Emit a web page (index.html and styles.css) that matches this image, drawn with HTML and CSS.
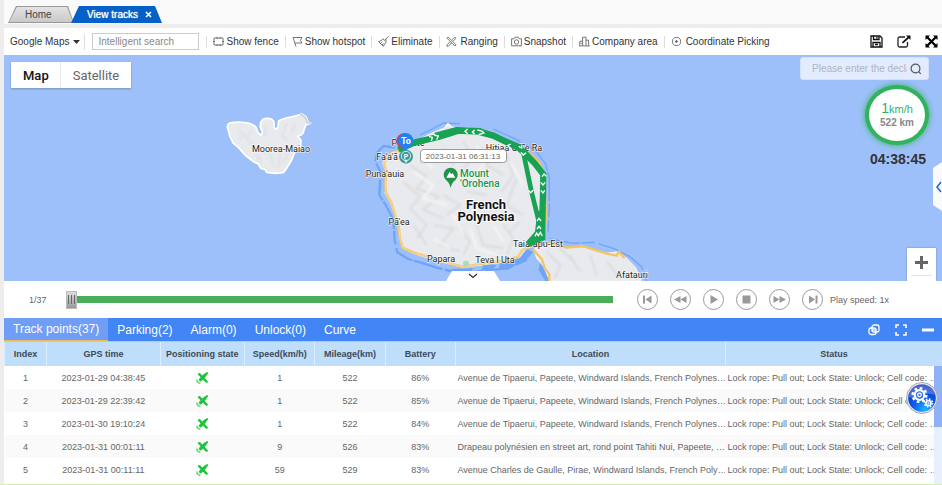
FILE: index.html
```html
<!DOCTYPE html>
<html lang="en">
<head>
<meta charset="utf-8">
<title>View tracks</title>
<link rel="stylesheet" href="styles.css">
</head>
<body>
<svg class="defs" aria-hidden="true">
  <symbol id="sat" viewBox="0 0 12 12">
    <g fill="none" stroke="#1fc43c" stroke-linecap="round">
      <path d="M4.6 7.6L8.8 3.4" stroke-width="3.4"/>
      <path d="M3.2 2.2L5.4 4.4M7.8 6.9L10.6 9.6" stroke-width="2.4"/>
      <path d="M9 3L11 1.2" stroke-width="2.2"/>
      <path d="M1 8.2Q1.2 10.6 3.6 11" stroke="#7fdc8d" stroke-width="2"/>
    </g>
  </symbol>
</svg>
<div class="app">
  <nav class="pages">
    <a class="page" href="#home"><span>Home</span></a>
    <a class="page current" href="#tracks"><span>View tracks</span>
      <svg width="7" height="7" viewBox="0 0 7 7"><path d="M1 1L6 6M6 1L1 6" stroke="#fff" stroke-width="1.7"/></svg></a>
  </nav>

  <div class="toolbar">
    <button class="provider">Google Maps
      <svg width="7" height="4" viewBox="0 0 7 4"><path d="M0 0H7L3.500 4Z" fill="#333"/></svg></button>
    <input class="search" type="text" placeholder="Intelligent search" aria-label="Intelligent search">
    <button class="tool"><svg viewBox="0 0 11 11"><path d="M1 2H10V9H1ZM4 .8V3M7 8V10.200M0 5.500H2M9 5.500H11M7 1V3M4 8V10"/></svg>Show fence</button>
    <button class="tool"><svg viewBox="0 0 11 11"><path d="M1 1.500L10 1.500L8.500 4.200L9.800 7H3M1 1.500L4 10.500"/></svg>Show hotspot</button>
    <button class="tool"><svg viewBox="0 0 11 11"><path d="M10.500 .5L7 3.800M5 2.800L8.300 6M5 2.800Q3.500 5 .6 5.600L5.400 10.400Q6.200 8 8.300 6M2.500 7.400L4 5.800M4 9L5.600 7.400M7.600 3.200Q9 4 8 5.200"/></svg>Eliminate</button>
    <button class="tool"><svg viewBox="0 0 11 11"><path d="M1 2.200L2.200 1L10 8.800L8.800 10ZM10 2.200L8.800 1L6.200 3.600M4.400 5.400L1 8.800L1 10.200H2.400L5.600 6.800M7.200 5.200L10 2.200"/></svg><i></i>Ranging</button>
    <button class="tool"><svg viewBox="0 0 11 11"><path d="M.6 2.800H3L4 1.200H7.200L8.200 2.800H10.400V9.800H.6Z"/><circle cx="5.500" cy="6" r="2.200"/></svg>Snapshot</button>
    <button class="tool"><svg viewBox="0 0 11 11"><path d="M.8 9.800V5.200H3.600M3.600 9.800V1.200H7V9.800M7 4.200H9.600V9.800M0 9.900H10.800M2.200 6.800V8"/></svg>Company area</button>
    <button class="tool"><svg viewBox="0 0 11 11"><circle cx="5.500" cy="5.500" r="4.100"/><circle cx="5.500" cy="5.500" r=".9" fill="#555"/></svg><i></i>Coordinate Picking</button>
    <div class="actions">
      <button aria-label="Save"><svg width="13" height="13" viewBox="0 0 13 13"><g fill="none" stroke="#111" stroke-width="1.300"><path d="M1 1H10L12 3V12H1Z"/><path d="M3.500 1V4.500H9V1M3 12V7.500H10V12M7 2V3.500M5 9.500H8"/></g></svg></button>
      <button aria-label="Open"><svg width="14" height="13" viewBox="0 0 14 13"><path d="M8 2H2.500Q1 2 1 3.500V10.500Q1 12 2.500 12H9Q10.500 12 10.500 10.500V7" fill="none" stroke="#222" stroke-width="1.300"/><path d="M5.500 7.800L12 2" stroke="#111" stroke-width="1.700"/><path d="M9 .5H13.500V5Z" fill="#111"/></svg></button>
      <button aria-label="Expand"><svg width="13" height="13" viewBox="0 0 13 13"><path d="M2 2L11 11M11 2L2 11" stroke="#000" stroke-width="2.200"/><path d="M.5 .5H5L.5 5ZM12.500 .5V5L8 .5ZM.5 12.500V8L5 12.500ZM12.500 12.500H8L12.500 8Z"/></svg></button>
    </div>
  </div>

  <main class="map">
    <svg class="canvas" viewBox="4 55 938 226" preserveAspectRatio="xMidYMid slice">
      <defs><filter id="soft"><feGaussianBlur stdDeviation="3"/></filter>
      <clipPath id="land"><path d="M115 110L150 92L180 72L215 55L250 40L262 30L285 38L320 38L370 45L410 60L450 85L490 100L520 125L545 155L558 185L556 240L555 300L550 355L545 375L530 385L500 400L480 425L440 440L400 445L350 452L310 458L280 450L240 440L200 428L160 415L130 400L122 370L118 330L105 300L90 260L75 235L80 200L78 170L68 145L80 125Z"/></clipPath></defs>
      <g transform="translate(220 100) scale(.33333)">
        <path class="island" d="M22 80Q24 68 36 68L55 66L75 68Q98 70 108 82L114 98L122 105L128 98L121 82Q120 56 138 55Q158 54 162 66V82L168 88L174 80L176 62L195 55L225 48L245 42L258 50L264 66L272 70L258 74L252 90Q250 108 232 108L243 120L242 140L225 155L215 180L200 205L190 218L165 220L140 217L135 208L122 205L115 192L100 185L75 165L55 142L40 130L30 110Z"/>
        <path d="M240 42L256 52L262 68L274 71" fill="none" stroke="#cfd1d3" stroke-width="5"/>
        <g class="ridge faint" filter="url(#soft)"><path d="M55 90L75 105L58 120M95 88L80 118L100 132M140 75L132 110M200 70L185 110L205 120M225 70L215 100M110 165L125 190M150 160L160 200M180 155L175 205M205 155L190 190"/></g>
        <circle cx="18" cy="62" r="3" fill="#b9c3cf"/>
      </g>
      <g transform="translate(360 115) scale(.33333)">
        <path class="reef" stroke-width="7" d="M105 98L70 93L52 112L46 140L62 172L60 205L58 240L80 275L100 315L104 375L112 412L145 432L190 445L230 458L270 468L320 474L380 466L440 460L500 435"/>
        <path class="reef" stroke-width="4" d="M180 60L225 38L250 24L300 26M400 42L470 74L525 105L556 145L568 190L568 280L564 350"/>
        <path d="M270 462L300 478L330 474L340 460ZM370 448L365 466L395 465L410 450ZM420 446L415 464L445 464L470 448L500 434L520 410L498 402L480 430ZM540 440L570 498H556L536 465Z" fill="#6fa4f8"/>
        <path class="reef" stroke-width="4" d="M570 372L640 385L700 382L760 400L810 425L845 455L860 498"/>
        <path class="shore" d="M115 110L150 92L180 72L215 55L250 40L262 30L285 38L320 38L370 45L410 60L450 85L490 100L520 125L545 155L558 185L556 240L555 300L550 355L545 375L530 385L500 400L480 425L440 440L400 445L350 452L310 458L280 450L240 440L200 428L160 415L130 400L122 370L118 330L105 300L90 260L75 235L80 200L78 170L68 145L80 125Z"/>
        <path class="shore" d="M522 402L560 384L620 398L670 393L740 415L775 410L800 430L825 455L843 490V500H570L552 455L530 430Z"/>
        <g clip-path="url(#land)"><g class="ridge" filter="url(#soft)">
          <path d="M150 150L200 185L170 220L235 245L190 285L250 310M130 200L180 245L150 280L200 330L170 370M250 100L280 150M310 80L340 130L310 160M400 100L380 150L430 180M440 120L460 180L425 230M470 190L440 270L490 300M220 330L280 340L240 390L300 410M290 330L330 380L310 420M350 330L370 390L430 400M430 330L460 370L440 420M480 320L450 350M160 330L200 390M250 240L300 270L260 300M320 230L380 240"/>
        </g><g class="ridge light" filter="url(#soft)"><path d="M160 170L220 210L190 250L260 270M350 90L370 150L340 190M450 140L490 210M220 370L270 400M330 340L350 400L410 420M180 120L220 160M280 300L310 360M400 330L430 380"/></g></g>
        <g class="ridge" filter="url(#soft)"><path d="M560 410L600 450L585 490M630 420L660 470M690 420L710 480M740 440L780 490M600 400L640 440"/></g>
        <g class="road"><path d="M118 108L98 112L78 128L72 148L80 170L76 205L78 235L94 262L105 298L116 330L120 370L128 398L160 412L200 424L240 436L280 448L310 456L350 448L400 442L440 436L475 424L488 405L510 395L535 383L554 350L558 300L552 180L540 145L500 106"/>
        <path d="M520 404L545 432L555 460L568 478V500M560 384L620 398L670 394L740 416L770 422L776 410L794 430"/></g>
        <g class="road inner"><path d="M118 108L98 112L78 128L72 148L80 170L76 205L78 235L94 262L105 298L116 330L120 370L128 398L160 412L200 424L240 436L280 448L310 456L350 448L400 442L440 436L475 424L488 405L510 395"/></g>
        <circle cx="318" cy="446" r="9" fill="#a9dcb8"/>
      </g>
      <g class="place">
        <text x="281" y="152">Moorea-Maiao</text>
        <text x="408" y="146">Papeete</text>
        <text x="387" y="160">Fa'a'ā</text>
        <text x="385" y="177">Puna'auia</text>
        <text x="399" y="225">Pā'ea</text>
        <text x="441" y="262">Papara</text>
        <text x="495" y="263">Teva I Uta</text>
        <text x="514" y="151">Hitiaa O Te Ra</text>
        <text x="538" y="247">Taiarapu-Est</text>
        <text x="632" y="278">Afatauri</text>
      </g>
      <g class="country"><text x="486" y="209">French</text><text x="486" y="221">Polynesia</text></g>
      <g class="peak"><text x="460" y="177">Mount</text><text x="460" y="187">'Orohena</text></g>
      <g transform="translate(360 115) scale(.33333)">
        <path d="M272 218Q268 202 257 194Q250 186 251 178Q254 159 272 158Q290 159 293 178Q294 186 287 194Q276 202 272 218Z" fill="#23924a"/>
        <path d="M259 188L269 170L274 178L278 174L286 188Z" fill="#fff"/>
        <g fill="none" stroke="#16a353" stroke-width="19" stroke-linejoin="round">
          <path d="M115 104L165 82L235 66L295 47L355 50L400 62L475 98L494 114L525 146L550 178L549 240L545 370"/>
          <path d="M225 60L290 43L360 46L480 95L490 112L514 228L538 325" stroke-width="14"/>
        </g>
        <path d="M532 290L556 280L556 374L530 384L508 396L498 380L525 350Z" fill="#16a353"/>
        <g fill="none" stroke="#fff" stroke-width="4">
          <path d="M207 64L217 67L214 78M222 60L235 63L230 74M323 42L315 49L323 56M344 45L337 51L344 58M352 45L366 48L372 54L356 59M452 87L443 92L453 101M476 94L485 99L486 88M483 112L490 120L498 113M506 226L512 233L519 226M546 185L552 177L559 184M542 202L549 210L556 202M542 226L549 234L554 226M531 318L537 310L543 318M531 342L537 334L543 342M525 364L530 354L535 362L541 352L547 363M256 35L264 27L273 34"/>
        </g>
        <circle cx="132" cy="78" r="23" fill="#e33b45"/><circle cx="137" cy="77" r="23" fill="#2480f5"/><path d="M126 98L137 108L147 98Z" fill="#2480f5"/>
        <circle cx="138" cy="125" r="21" fill="#3e9999"/><circle cx="138" cy="123" r="14" fill="none" stroke="#d9eeee" stroke-width="3"/><path d="M131 134L138 145L145 134Z" fill="#d9eeee"/>
      </g>
      <text class="to" x="406" y="144">To</text>
      <text class="park" x="406" y="159">P</text>
      <rect x="420.500" y="149.500" width="86" height="13" rx="3" fill="#fff" stroke="#999"/>
      <text class="stamp" x="463" y="159">2023-01-31 06:31:13</text>
    </svg>

    <div class="maptype"><button class="on">Map</button><button>Satellite</button></div>
    <div class="side">
      <div class="declare"><input type="text" placeholder="Please enter the declaration" aria-label="Declaration number">
        <svg width="12" height="12" viewBox="0 0 12 12"><circle cx="5.500" cy="5.500" r="4.400" fill="none" stroke="#555" stroke-width="1.200"/><path d="M8.600 8.600L10.800 10.800" stroke="#555" stroke-width="1.200"/></svg></div>
      <div class="gauge"><div><span class="num">1</span><span class="unit">km/h</span></div><b>522 km</b></div>
      <div class="clock">04:38:45</div>
    </div>
    <button class="drawer" aria-label="Open panel"><svg width="6" height="12" viewBox="0 0 6 12"><path d="M5 1L1 6L5 11" fill="none" stroke="#1768c8" stroke-width="1.500"/></svg></button>
    <button class="zoomin" aria-label="Zoom in"><svg width="13" height="13" viewBox="0 0 13 13"><path d="M6.500 0V13M0 6.500H13" stroke="#666" stroke-width="3"/></svg></button>
    <button class="fold" aria-label="Collapse"><svg width="10" height="6" viewBox="0 0 10 6"><path d="M1 1L5 4.500L9 1" fill="none" stroke="#333" stroke-width="1.300"/></svg></button>
  </main>

  <section class="player">
    <label class="count" for="pos">1/37</label>
    <input id="pos" class="progress" type="range" min="1" max="37" value="1">
    <div class="controls">
      <button aria-label="First"><svg viewBox="0 0 21 21"><path d="M6 6.500H8V14.500H6ZM14.500 6.500V14.500L8.500 10.500Z"/></svg></button>
      <button aria-label="Rewind"><svg viewBox="0 0 21 21"><path d="M10.500 7V14L4 10.500ZM16.500 7V14L10.500 10.500Z"/></svg></button>
      <button aria-label="Play"><svg viewBox="0 0 21 21"><path d="M7.500 6V15L15 10.500Z"/></svg></button>
      <button aria-label="Stop"><svg viewBox="0 0 21 21"><path d="M6.500 6.500H14.500V14.500H6.500Z"/></svg></button>
      <button aria-label="Forward"><svg viewBox="0 0 21 21"><path d="M4.500 7V14L10.500 10.500ZM10.500 7V14L17 10.500Z"/></svg></button>
      <button aria-label="Last"><svg viewBox="0 0 21 21"><path d="M13.500 6.500H15.500V14.500H13.500ZM7 6.500V14.500L13 10.500Z"/></svg></button>
    </div>
    <span class="speed">Play speed: 1x</span>
  </section>

  <section class="panel">
    <div class="tabs">
      <button class="on">Track points(37)</button><button>Parking(2)</button><button>Alarm(0)</button><button>Unlock(0)</button><button>Curve</button>
      <div class="window">
        <button aria-label="Restore"><svg width="12" height="12" viewBox="0 0 12 12"><g fill="none" stroke="#fff" stroke-width="1.300"><rect x="4" y="1" width="7" height="7" rx="2"/><rect x="1" y="4" width="7" height="6.500" rx="2"/><path d="M4 6H8"/></g></svg></button>
        <button aria-label="Full screen"><svg width="12" height="12" viewBox="0 0 12 12"><path d="M1 4V1H4M8 1H11V4M11 8V11H8M4 11H1V8" fill="none" stroke="#fff" stroke-width="1.600"/></svg></button>
        <button aria-label="Minimise"><svg width="12" height="12" viewBox="0 0 12 12"><path d="M0 6H12" stroke="#fff" stroke-width="3"/></svg></button>
      </div>
    </div>
    <div class="grid">
      <table>
        <colgroup><col class="c1"><col class="c2"><col class="c3"><col class="c4"><col class="c4"><col class="c4"><col class="c7"><col class="c8"></colgroup>
        <thead><tr><th>Index</th><th>GPS time</th><th>Positioning state</th><th>Speed(km/h)</th><th>Mileage(km)</th><th>Battery</th><th>Location</th><th>Status</th></tr></thead>
        <tbody>
          <tr><td>1</td><td>2023-01-29 04:38:45</td><td><svg class="sat"><use href="#sat"/></svg></td><td>1</td><td>522</td><td>86%</td><td>Avenue de Tipaerui, Papeete, Windward Islands, French Polynes…</td><td>Lock rope: Pull out; Lock State: Unlock; Cell code: …</td></tr>
          <tr><td>2</td><td>2023-01-29 22:39:42</td><td><svg class="sat"><use href="#sat"/></svg></td><td>1</td><td>522</td><td>85%</td><td>Avenue de Tipaerui, Papeete, Windward Islands, French Polynes…</td><td>Lock rope: Pull out; Lock State: Unlock; Cell code: …</td></tr>
          <tr><td>3</td><td>2023-01-30 19:10:24</td><td><svg class="sat"><use href="#sat"/></svg></td><td>1</td><td>522</td><td>84%</td><td>Avenue de Tipaerui, Papeete, Windward Islands, French Polynes…</td><td>Lock rope: Pull out; Lock State: Unlock; Cell code: …</td></tr>
          <tr><td>4</td><td>2023-01-31 00:01:11</td><td><svg class="sat"><use href="#sat"/></svg></td><td>9</td><td>526</td><td>83%</td><td>Drapeau polynésien en street art, rond point Tahiti Nui, Papeete, …</td><td>Lock rope: Pull out; Lock State: Unlock; Cell code: …</td></tr>
          <tr><td>5</td><td>2023-01-31 00:11:11</td><td><svg class="sat"><use href="#sat"/></svg></td><td>59</td><td>529</td><td>83%</td><td>Avenue Charles de Gaulle, Pirae, Windward Islands, French Poly…</td><td>Lock rope: Pull out; Lock State: Unlock; Cell code: …</td></tr>
        </tbody>
      </table>
      <div class="scroll"><div class="thumb"></div></div>
      <button class="gear" aria-label="Settings"><svg width="32" height="32" viewBox="0 0 32 32">
        <defs><radialGradient id="ball" cx=".6" cy=".9" r=".9"><stop offset="0" stop-color="#19b4ff"/><stop offset=".45" stop-color="#0b5cf0"/><stop offset="1" stop-color="#0a2fb4"/></radialGradient></defs>
        <circle cx="16" cy="16" r="15.500" fill="#e4e4e8" stroke="#a9a9ae"/><circle cx="16" cy="16" r="13.800" fill="url(#ball)"/>
        <path d="M3 15A13 13 0 0 1 29 13Q20 10 16 14Q10 18 3 15Z" fill="#fff" opacity=".25"/>
        <g fill="none" stroke="#fff"><circle cx="13.500" cy="13" r="4.800" stroke-width="2.200"/><circle cx="13.500" cy="13" r="6.900" stroke-width="2.400" stroke-dasharray="2.700 2.720"/><circle cx="13.500" cy="13" r="1.800" stroke-width="1.200"/><circle cx="22.500" cy="21" r="2.600" stroke-width="1.500"/><circle cx="22.500" cy="21" r="4" stroke-width="1.500" stroke-dasharray="1.570 1.570"/><circle cx="22.500" cy="21" r=".8"/></g></svg></button>
    </div>
  </section>
</div>
</body>
</html>
```
FILE: styles.css
```css
* { box-sizing: border-box; }
body { margin: 0; background: #ededed; font-family: "Liberation Sans", Arial, sans-serif; font-size: 10px; color: #333; }
button { border: 0; padding: 0; margin: 0; background: none; font: inherit; color: inherit; display: flex; align-items: center; justify-content: center; }
input { font: inherit; }
.defs { position: absolute; width: 0; height: 0; }
.app { min-height: 100vh; padding-left: 4px; display: flex; flex-direction: column; border-bottom: 1px solid #d9ecb4; }

.pages { height: 24px; background: #fafafa; display: flex; align-items: flex-end; padding: 0 4px 1px; }
.page { position: relative; height: 17px; width: 66px; display: flex; align-items: center; padding-left: 17px; gap: 7px; color: #444; text-decoration: none; background: #999; clip-path: polygon(8px 0, 60px 0, 100% 100%, 0 100%); }
.page::before { content: ""; position: absolute; inset: 1px; background: linear-gradient(#e3e3e3, #c9c9c9); clip-path: polygon(8px 0, 58px 0, 100% 100%, 0 100%); }
.page > * { position: relative; }
.page.current { width: 91px; margin-left: -3px; padding-left: 16px; color: #fff; background: #0560c8; clip-path: polygon(8px 0, 84px 0, 100% 100%, 0 100%); text-shadow: 0 0 1px #fff; }
.page.current::before { display: none; }

.toolbar { margin-top: 4px; height: 27px; background: #fff; display: flex; align-items: center; white-space: nowrap; }
.provider { padding-left: 6px; padding-right: 4px; gap: 4px; border-right: 1px solid #ddd; height: 16px; }
.search { width: 107px; height: 17px; margin: 0 7px; padding: 0 5px; border: 1px solid #ccc; }
.search::placeholder { color: #888; }
.tool { height: 12px; padding: 0 6px; gap: 2px; border-left: 1px solid #ddd; }
.tool i { width: 0; }
.tool svg { width: 11px; height: 11px; fill: none; stroke: #666; stroke-width: .9; }
.actions { margin-left: auto; display: flex; gap: 14px; padding-right: 4px; }

.map { position: relative; flex: 1; min-height: 180px; background: #9dc0fa; overflow: hidden; }
.canvas { position: absolute; inset: 0; width: 100%; height: 100%; }
.island, .shore { fill: #e9eaed; stroke: #fff; stroke-width: 5; stroke-linejoin: round; }
.shore { stroke: #f4f4f4; stroke-width: 3; }
.reef { fill: none; stroke: #6fa4f8; stroke-linejoin: round; stroke-dasharray: 90 6 40 12 65 4; }
.ridge { fill: none; stroke: #d9dbde; stroke-width: 6; }
.ridge.faint { stroke: #dfe0e3; }
.ridge.light { stroke: #f5f6f7; }
.road { fill: none; stroke: #f2c566; stroke-width: 7; stroke-linejoin: round; }
.road.inner { stroke: #fde2a2; stroke-width: 2; }
.place text { font: 9px Roboto, sans-serif; fill: #222; text-anchor: middle; stroke: #fff; stroke-width: 1px; paint-order: stroke; }
.country text { font: bold 13px Roboto, sans-serif; fill: #111; text-anchor: middle; stroke: #fff; stroke-width: 2px; paint-order: stroke; }
.peak text { font: 500 10px Roboto, sans-serif; fill: #23924a; stroke: #fff; stroke-width: 1px; paint-order: stroke; }
.to { font: bold 9px Roboto, sans-serif; fill: #fff; text-anchor: middle; }
.park { font: bold 7px Roboto, sans-serif; fill: #fff; text-anchor: middle; }
.stamp { font: 8px "Liberation Sans", sans-serif; fill: #666; text-anchor: middle; }

.maptype { position: absolute; left: 7px; top: 7px; height: 26px; display: flex; background: #fff; box-shadow: 0 1px 2px rgba(0,0,0,.25); font: 13px Roboto, sans-serif; color: #666; }
.maptype button { padding: 0 12px; }
.maptype .on { padding-right: 11px; font-weight: 500; color: #111; border-right: 1px solid #e6e6e6; }
.side { position: absolute; right: 13px; top: 2px; display: flex; flex-direction: column; align-items: flex-end; }
.declare { display: flex; align-items: center; width: 129px; height: 23px; padding: 0 6px 0 11px; gap: 3px; border-radius: 3px; background: rgba(255,255,255,.7); border: 1px solid #d5e2f6; }
.declare input { flex: 1; min-width: 0; padding: 0; border: 0; background: none; }
.declare input::placeholder { color: #aeb4be; }
.gauge { width: 64px; height: 60px; margin-top: 5px; border: 4px solid #31b25d; border-radius: 50%; background: #fff; box-shadow: 0 0 6px #31b25d; display: flex; flex-direction: column; align-items: center; justify-content: center; gap: 1px; line-height: 12px; color: #888; }
.num { font-size: 14px; color: #31b25d; }
.unit { font-size: 11px; color: #31b25d; }
.clock { margin: 6px 3px 0; font-size: 14px; font-weight: bold; line-height: 16px; }
.drawer { position: absolute; right: 0; top: 107px; width: 9px; height: 49px; padding-left: 2px; background: #fafafa; clip-path: polygon(100% 0, 0 12%, 0 88%, 100% 100%); }
.zoomin { position: absolute; right: 6px; bottom: 0; width: 29px; height: 33px; padding-bottom: 5px; background: #fff; box-shadow: 0 0 2px rgba(0,0,0,.3); }
.zoomin::after { content: ""; position: absolute; left: 4px; right: 4px; bottom: 5px; height: 1px; background: #e3e3e3; }
.fold { position: absolute; left: 50%; bottom: 0; margin-left: -27px; width: 54px; height: 10px; background: #fff; clip-path: polygon(6px 0, 48px 0, 100% 100%, 0 100%); }

.player { height: 37px; background: #fff; display: flex; align-items: center; font-size: 9px; color: #666; }
.count { width: 62px; padding-left: 25px; }
.progress { flex: 1; min-width: 100px; height: 18px; margin: 0; appearance: none; background: linear-gradient(#4aae58, #4aae58) center / 100% 7px no-repeat; }
.progress::-webkit-slider-thumb { appearance: none; width: 11px; height: 18px; border: 1px solid #bbb; background: linear-gradient(90deg, transparent 1px, #666 1px 2px, transparent 2px 4px, #666 4px 5px, transparent 5px 7px, #666 7px 8px, transparent 8px) center / 100% 9px no-repeat, linear-gradient(#ddd, #999); }
.controls { display: flex; gap: 12px; margin-left: 24px; }
.controls button { width: 21px; height: 21px; border: 1px solid #999; border-radius: 50%; }
.controls svg { width: 21px; height: 21px; flex: none; fill: #999; }
.speed { width: 119px; padding-left: 7px; white-space: nowrap; }

.tabs { height: 24px; background: #4285f4; border-bottom: 1px solid #a9cbfa; color: #fff; font-size: 12px; display: flex; }
.tabs > button { padding: 0 9px; }
.tabs > .on { background: #709df6; border-bottom: 1px solid #f0b95e; }
.window { margin-left: auto; display: flex; gap: 15px; padding-right: 8px; }
.grid { position: relative; background: #fff; padding-bottom: 3px; }
table { width: 100%; table-layout: fixed; border-collapse: collapse; font-size: 9px; color: #666; }
.c1 { width: 4.5%; } .c2 { width: 12.1%; } .c3 { width: 9%; } .c4 { width: 7.5%; } .c7 { width: 28.8%; } .c8 { width: 23.1%; }
th { height: 24px; padding: 0; background: #bfdefc; border-left: 1px solid #dcedfe; color: #3b4a5a; }
td { height: 23px; padding: 0; text-align: center; white-space: nowrap; overflow: hidden; }
tr:nth-child(even) td { background: #fafafa; }
td:nth-child(n+7) { text-align: left; padding: 0 0 0 2px; }
.sat { width: 12px; height: 12px; display: block; margin: 0 auto; }
.scroll { position: absolute; right: 0; top: 24px; bottom: 0; width: 8px; background: #e8effd; }
.thumb { height: 52%; background: #8fb1f6; }
.gear { position: absolute; right: 4px; top: 40px; }
```
